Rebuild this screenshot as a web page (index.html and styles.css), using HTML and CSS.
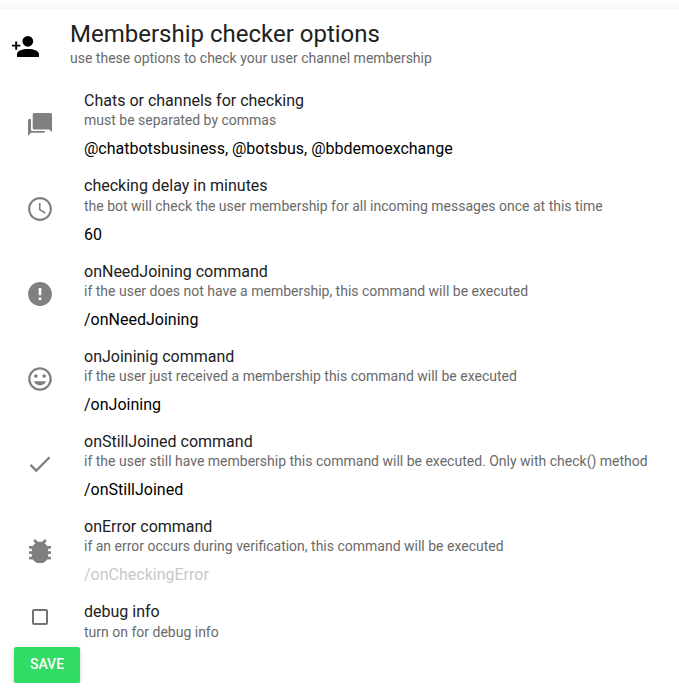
FILE: index.html
```html
<!DOCTYPE html>
<html lang="en">
<head>
<meta charset="utf-8">
<title>Membership checker options</title>
<link rel="stylesheet" href="styles.css">
</head>
<body>
<div class="top-shadow"></div>
<main class="panel">
  <header class="header">
    <svg class="header-icon" viewBox="0 0 28 28"><circle cx="16.800" cy="9.300" r="5.400"/><path d="M6 25v-2.700c0-3.500 5.500-5.300 11-5.300s11 1.800 11 5.300V25zM4.200 9.500h2v3.200h3.200v1.800H6.200v3.200h-2v-3.200H1v-1.800h3.200z"/></svg>
    <div>
      <h1>Membership checker options</h1>
      <p class="hint">use these options to check your user channel membership</p>
    </div>
  </header>
  <section class="list">
    <div class="row">
      <svg class="icon" viewBox="0 0 26 26"><path d="M7.200 2h16.300c.8 0 1.500.7 1.500 1.500V21l-3-2.500H7.200c-.8 0-1.500-.7-1.500-1.500V3.500C5.700 2.700 6.400 2 7.200 2zM1 9.500C1 8.700 1.700 8 2.500 8H4v10.500c0 .9.600 1.500 1.500 1.500H18v.2c0 .8-.7 1.600-1.500 1.600H4L1 25z"/></svg>
      <div class="text"><h2>Chats or channels for checking</h2><p class="hint">must be separated by commas</p><input value="@chatbotsbusiness, @botsbus, @bbdemoexchange"></div>
    </div>
    <div class="row">
      <svg class="icon" viewBox="0 0 24 24"><path d="M11.990 1C6 1 1 6 1 12s5 11 10.990 11C18 23 23 18 23 12S18 1 11.990 1zM12 21c-5 0-9-4-9-9s4-9 9-9 9 4 9 9-4 9-9 9z"/><path d="M12.500 6.500H11v6.500l5.500 3.300.8-1.300-4.800-2.800z"/></svg>
      <div class="text"><h2>checking delay in minutes</h2><p class="hint">the bot will check the user membership for all incoming messages once at this time</p><input value="60"></div>
    </div>
    <div class="row">
      <svg class="icon" viewBox="0 0 24 24"><path d="M12 1C5.900 1 1 5.900 1 12s4.900 11 11 11 11-4.900 11-11S18.100 1 12 1zm1.200 16.500h-2.400v-2.200h2.400v2.200zm0-4.400h-2.400V6.500h2.400v6.600z"/></svg>
      <div class="text"><h2>onNeedJoining command</h2><p class="hint">if the user does not have a membership, this command will be executed</p><input value="/onNeedJoining"></div>
    </div>
    <div class="row">
      <svg class="icon" viewBox="1 1 22 22"><path d="M11.990 2C6.470 2 2 6.480 2 12s4.470 10 9.990 10S22 17.520 22 12 17.520 2 11.990 2zM12 20c-4.420 0-8-3.580-8-8s3.580-8 8-8 8 3.580 8 8-3.580 8-8 8zm3.500-9c.83 0 1.500-.67 1.500-1.500S16.330 8 15.500 8 14 8.670 14 9.500s.67 1.500 1.500 1.500zm-7 0c.83 0 1.500-.67 1.500-1.500S9.330 8 8.500 8 7 8.670 7 9.500 7.670 11 8.500 11zM12 17.500c2.330 0 4.310-1.460 5.110-3.500H6.890c.8 2.040 2.780 3.500 5.110 3.500z"/></svg>
      <div class="text"><h2>onJoininig command</h2><p class="hint">if the user just received a membership this command will be executed</p><input value="/onJoining"></div>
    </div>
    <div class="row">
      <svg class="icon" viewBox="1.200 1 22 22"><path d="M9 16.170L4.830 12l-1.420 1.410L9 19 21 7l-1.410-1.410z"/></svg>
      <div class="text"><h2>onStillJoined command</h2><p class="hint">if the user still have membership this command will be executed. Only with check() method</p><input value="/onStillJoined"></div>
    </div>
    <div class="row">
      <svg class="icon" viewBox="2.450 1.450 19.100 19.100"><path d="M20 8h-2.810c-.45-.78-1.070-1.450-1.820-1.960L17 4.410 15.590 3l-2.170 2.170C12.960 5.060 12.490 5 12 5s-.96.06-1.410.17L8.410 3 7 4.410l1.620 1.630C7.880 6.550 7.260 7.220 6.810 8H4v2h2.090c-.05.33-.09.66-.09 1v1H4v2h2v1c0 .34.04.67.09 1H4v2h2.810c1.040 1.790 2.970 3 5.190 3s4.150-1.210 5.190-3H20v-2h-2.090c.05-.33.09-.66.09-1v-1h2v-2h-2v-1c0-.34-.04-.67-.09-1H20z"/></svg>
      <div class="text"><h2>onError command</h2><p class="hint">if an error occurs during verification, this command will be executed</p><input placeholder="/onCheckingError"></div>
    </div>
    <div class="row row-check">
      <span class="checkbox"></span>
      <div class="text"><h2>debug info</h2><p class="hint">turn on for debug info</p></div>
    </div>
  </section>
  <button class="save">SAVE</button>
</main>
</body>
</html>
```
FILE: styles.css
```css
* { box-sizing: border-box; }
body { margin: 0; background: #fff; color: #212121; font-family: Roboto, sans-serif; overflow: hidden; }
h1, h2, p { margin: 0; font-weight: 400; white-space: nowrap; }
.top-shadow { height: 9px; background: linear-gradient(#fff, #fdfdfd 50%, #f5f5f5); }
.header { display: flex; height: 77px; padding: 11px 0 0 11px; }
.header-icon { width: 28px; height: 28px; margin: 12px 31px 0 0; fill: #000; }
h1 { font-size: 24px; line-height: 29px; height: 28px; }
.hint { font-size: 14px; line-height: 20px; color: #6a6a6a; }
.row { display: flex; height: 85.18px; padding: 5.25px 0 0 27px; }
.icon { width: 26px; height: 26px; margin: 19.5px 31px 0 0; fill: #808080; flex: none; }
h2 { font-size: 16px; line-height: 20px; height: 19.2px; }
input { display: block; width: 560px; height: 24px; margin-top: 7px; padding: 0; border: 0; outline: 0; background: none; color: #000; font: 16px/24px Roboto, sans-serif; }
input::placeholder { color: #c8c8c8; opacity: 1; }
.row-check { height: 49.92px; }
.row-check h2 { height: 20px; }
.checkbox { width: 16px; height: 16px; margin: 7px 36px 0 5px; border: 2px solid #737373; border-radius: 2px; flex: none; }
.save { display: block; width: 66px; height: 36px; margin-left: 14px; border: 0; border-radius: 2px; background: #32db64; color: #fff; font: 500 14px/34px Roboto, sans-serif; padding: 0 0 2px; box-shadow: 0 3px 1px -2px rgba(0,0,0,.2), 0 2px 2px rgba(0,0,0,.14), 0 1px 5px rgba(0,0,0,.12); }
```
